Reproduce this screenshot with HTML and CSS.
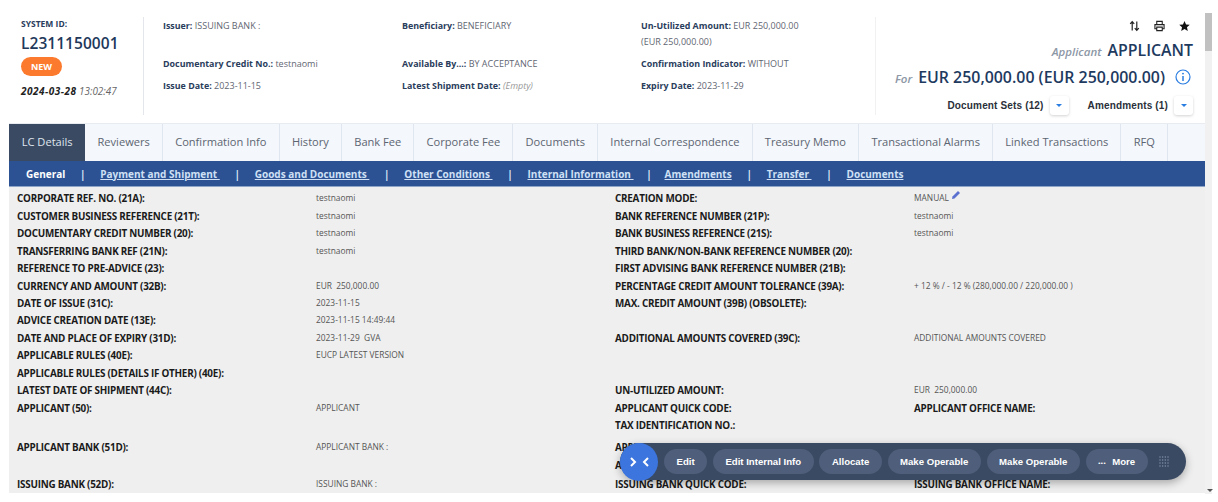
FILE: index.html
```html
<!DOCTYPE html>
<html lang="en">
<head>
<meta charset="utf-8">
<title>LC Details</title>
<link rel="stylesheet" href="styles.css">
</head>
<body>
<div class="shell">
  <main class="main">
    <header class="head">
      <section class="ident">
        <div class="sys-label">SYSTEM ID:</div>
        <div class="sys-id">L2311150001</div>
        <span class="badge">NEW</span>
        <div class="stamp"><b>2024-03-28</b> 13:02:47</div>
      </section>
      <section class="info">
        <div class="info-cell tall"><b>Issuer:</b> ISSUING BANK :</div>
        <div class="info-cell tall"><b>Beneficiary:</b> BENEFICIARY</div>
        <div class="info-cell tall"><b>Un-Utilized Amount:</b> EUR 250,000.00<br>(EUR 250,000.00)</div>
        <div class="info-cell"><b>Documentary Credit No.:</b> testnaomi</div>
        <div class="info-cell"><b>Available By...:</b> BY ACCEPTANCE</div>
        <div class="info-cell"><b>Confirmation Indicator:</b> WITHOUT</div>
        <div class="info-cell"><b>Issue Date:</b> 2023-11-15</div>
        <div class="info-cell"><b>Latest Shipment Date:</b> <i class="empty">(Empty)</i></div>
        <div class="info-cell"><b>Expiry Date:</b> 2023-11-29</div>
      </section>
      <section class="summary">
        <div class="tools">
          <svg class="tool" viewBox="0 0 12 12"><path d="M3.5 11V1.5M1.3 3.7 3.5 1.3l2.2 2.4M8.5 1v9.5M6.3 8.3l2.2 2.4 2.2-2.4" fill="none" stroke="#222" stroke-width="1.3"/></svg>
          <svg class="tool" viewBox="0 0 12 12"><path d="M3 4V1h6v3M3 9H1V4.5h10V9H9M3 7.2h6V11H3z" fill="none" stroke="#222" stroke-width="1.2"/></svg>
          <svg class="tool" viewBox="0 0 12 12"><path d="M6 .6 7.7 4.3l4 .4-3 2.7.9 4L6 9.3l-3.6 2.1.9-4-3-2.7 4-.4z" fill="#111"/></svg>
        </div>
        <div class="party"><i>Applicant</i><strong>APPLICANT</strong></div>
        <div class="amount"><i>For</i><strong>EUR 250,000.00 (EUR 250,000.00)</strong>
          <svg class="info-icon" viewBox="0 0 16 16"><circle cx="8" cy="8" r="7" fill="none" stroke="#2a7de1" stroke-width="1.2"/><path d="M8 7v5" stroke="#2a7de1" stroke-width="1.5"/><circle cx="8" cy="4.6" r=".95" fill="#2a7de1"/></svg>
        </div>
        <div class="drops">
          <span>Document Sets (12)</span><button class="drop" type="button"><span class="caret"></span></button>
          <span class="drop-second">Amendments (1)</span><button class="drop" type="button"><span class="caret"></span></button>
        </div>
      </section>
    </header>

    <nav class="tabs">
      <a class="tab active">LC Details</a>
      <a class="tab">Reviewers</a>
      <a class="tab">Confirmation Info</a>
      <a class="tab">History</a>
      <a class="tab">Bank Fee</a>
      <a class="tab">Corporate Fee</a>
      <a class="tab">Documents</a>
      <a class="tab">Internal Correspondence</a>
      <a class="tab">Treasury Memo</a>
      <a class="tab">Transactional Alarms</a>
      <a class="tab">Linked Transactions</a>
      <a class="tab">RFQ</a>
    </nav>

    <nav class="subnav">
      <a class="current">General</a><span class="sep">|</span>
      <a>Payment and Shipment&nbsp;</a><span class="sep">|</span>
      <a>Goods and Documents&nbsp;</a><span class="sep">|</span>
      <a>Other Conditions&nbsp;</a><span class="sep">|</span>
      <a>Internal Information&nbsp;</a><span class="sep sep-narrow">|</span>
      <a>Amendments</a><span class="sep">|</span>
      <a>Transfer&nbsp;</a><span class="sep">|</span>
      <a>Documents</a>
    </nav>

    <section class="details">
      <div class="row"><b>CORPORATE REF. NO. (21A):</b><span>testnaomi</span><b>CREATION MODE:</b><span>MANUAL <svg class="pencil" viewBox="0 0 10 10"><path d="M1 9l.5-2.500L7 1l2 2-5.500 5.500z" fill="#5b70cf"/></svg></span></div>
      <div class="row"><b>CUSTOMER BUSINESS REFERENCE (21T):</b><span>testnaomi</span><b>BANK REFERENCE NUMBER (21P):</b><span>testnaomi</span></div>
      <div class="row"><b>DOCUMENTARY CREDIT NUMBER (20):</b><span>testnaomi</span><b>BANK BUSINESS REFERENCE (21S):</b><span>testnaomi</span></div>
      <div class="row"><b>TRANSFERRING BANK REF (21N):</b><span>testnaomi</span><b>THIRD BANK/NON-BANK REFERENCE NUMBER (20):</b><span></span></div>
      <div class="row"><b>REFERENCE TO PRE-ADVICE (23):</b><span></span><b>FIRST ADVISING BANK REFERENCE NUMBER (21B):</b><span></span></div>
      <div class="row"><b>CURRENCY AND AMOUNT (32B):</b><span>EUR&nbsp; 250,000.00</span><b>PERCENTAGE CREDIT AMOUNT TOLERANCE (39A):</b><span>+ 12 % / - 12 % (280,000.00 / 220,000.00 )</span></div>
      <div class="row"><b>DATE OF ISSUE (31C):</b><span>2023-11-15</span><b>MAX. CREDIT AMOUNT (39B) (OBSOLETE):</b><span></span></div>
      <div class="row"><b>ADVICE CREATION DATE (13E):</b><span>2023-11-15 14:49:44</span><b></b><span></span></div>
      <div class="row"><b>DATE AND PLACE OF EXPIRY (31D):</b><span>2023-11-29&nbsp; GVA</span><b>ADDITIONAL AMOUNTS COVERED (39C):</b><span>ADDITIONAL AMOUNTS COVERED</span></div>
      <div class="row"><b>APPLICABLE RULES (40E):</b><span>EUCP LATEST VERSION</span><b></b><span></span></div>
      <div class="row"><b>APPLICABLE RULES (DETAILS IF OTHER) (40E):</b><span></span><b></b><span></span></div>
      <div class="row"><b>LATEST DATE OF SHIPMENT (44C):</b><span></span><b>UN-UTILIZED AMOUNT:</b><span>EUR&nbsp; 250,000.00</span></div>
      <div class="row"><b>APPLICANT (50):</b><span>APPLICANT</span><b>APPLICANT QUICK CODE:</b><b>APPLICANT OFFICE NAME:</b></div>
      <div class="row"><b></b><span></span><b>TAX IDENTIFICATION NO.:</b><span></span></div>
      <div class="row row-gap-a"><b>APPLICANT BANK (51D):</b><span>APPLICANT BANK :</span><b>APPLICANT BANK QUICK CODE:</b><span></span></div>
      <div class="row"><b></b><span></span><b>ADVISING BANK:</b><span></span></div>
      <div class="row row-gap-b"><b>ISSUING BANK (52D):</b><span>ISSUING BANK :</span><b>ISSUING BANK QUICK CODE:</b><b>ISSUING BANK OFFICE NAME:</b></div>
    </section>
  </main>
  <aside class="scrollbar"><div class="thumb"></div><div class="arrow"></div></aside>
</div>

<div class="actions">
  <button class="toggle" type="button" aria-label="Toggle"><svg viewBox="0 0 20 12"><path d="M2 2 6 6l-4 4M19 2l-4 4 4 4" fill="none" stroke="#fff" stroke-width="2"/></svg></button>
  <button class="act" type="button">Edit</button>
  <button class="act" type="button">Edit Internal Info</button>
  <button class="act" type="button">Allocate</button>
  <button class="act" type="button">Make Operable</button>
  <button class="act" type="button">Make Operable</button>
  <button class="act" type="button"><span class="dots">•••</span>More</button>
  <svg class="grip" viewBox="0 0 10 11"><g fill="#8896ad"><circle cx="1" cy="1" r=".7"/><circle cx="3.700" cy="1" r=".7"/><circle cx="6.300" cy="1" r=".7"/><circle cx="9" cy="1" r=".7"/><circle cx="1" cy="4" r=".7"/><circle cx="3.700" cy="4" r=".7"/><circle cx="6.300" cy="4" r=".7"/><circle cx="9" cy="4" r=".7"/><circle cx="1" cy="7" r=".7"/><circle cx="3.700" cy="7" r=".7"/><circle cx="6.300" cy="7" r=".7"/><circle cx="9" cy="7" r=".7"/><circle cx="1" cy="10" r=".7"/><circle cx="3.700" cy="10" r=".7"/><circle cx="6.300" cy="10" r=".7"/><circle cx="9" cy="10" r=".7"/></g></svg>
</div>
</body>
</html>
```

FILE: styles.css
```css
* { box-sizing: border-box; }
html, body { height: 100%; }
body {
  margin: 0;
  background: #fff;
  overflow: hidden;
  font-family: "Open Sans", "Liberation Sans", sans-serif;
  color: #555;
}
.shell { display: flex; padding-left: 9px; }
.main { width: 1196px; flex: none; }

/* scrollbar */
.scrollbar {
  position: relative;
  width: 7px;
  height: 481px;
  margin-top: 13px;
  background: #f1f1f1;
}
.thumb { height: 38px; background: #c1c1c1; }
.arrow {
  position: absolute;
  left: 2px;
  bottom: 2px;
  border: 3px solid transparent;
  border-top: 3px solid #555;
  border-bottom: 0;
}

/* header */
.head {
  display: flex;
  height: 123px;
  padding: 17px 12px 0 12px;
}
.ident {
  width: 123px;
  height: 98px;
  flex: none;
  border-right: 1px solid #e3e6ea;
  margin-right: 19px;
}
.sys-label { font-size: 8.500px; font-weight: 700; color: #2a3d5c; line-height: 14px; }
.sys-id { font-size: 15.500px; font-weight: 600; color: #22385a; line-height: 20px; margin-top: 2px; letter-spacing: .05px; }
.badge {
  display: inline-block;
  margin-top: 4px;
  width: 41px;
  height: 19px;
  border-radius: 10px;
  background: #fb7a2d;
  color: #fff;
  font-size: 9px;
  font-weight: 700;
  line-height: 19px;
  text-align: center;
}
.stamp { font-size: 9.900px; font-style: italic; margin-top: 7px; color: #666; line-height: 16px; }
.stamp b { color: #222; font-weight: 700; font-size: 10px; letter-spacing: .5px; }

.info {
  width: 713px;
  flex: none;
  display: grid;
  grid-template-columns: 239px 239px 235px;
  grid-template-rows: 38px 22px 22px;
  padding-top: 1px;
  border-right: 1px solid #f0f1f3;
  height: 98px;
  align-content: start;
  font-size: 9px;
  line-height: 16px;
  color: #5f6672;
}
.info-cell b { color: #2a3d5c; font-weight: 700; font-size: 8.900px; }
.empty { color: #999; }

.summary { flex: 1; display: flex; flex-direction: column; align-items: flex-end; }
.tools { display: flex; gap: 14px; height: 21px; padding: 3px 3px 0 0; }
.tool { width: 11px; height: 12px; display: block; }
.party { display: flex; align-items: baseline; height: 24px; gap: 6px; line-height: 24px; }
.party i { font-size: 11.500px; font-weight: 600; color: #8d97a6; }
.party strong, .amount strong { color: #1e3a5f; font-weight: 600; font-size: 15.900px; }
.amount { display: flex; align-items: center; height: 30px; }
.amount i { font-size: 11.500px; font-weight: 600; color: #8d97a6; margin-right: 6px; position: relative; top: 1px; }
.amount strong { margin-right: 10px; }
.info-icon { width: 16px; height: 16px; margin-right: 2px; }
.drops {
  display: flex;
  align-items: center;
  font-family: "Liberation Sans", Arial, sans-serif;
  font-size: 10px;
  font-weight: 700;
  letter-spacing: .15px;
  color: #2a2f3a;
  height: 19px;
  margin-top: 4px;
}
.drop-second { margin-left: 19px; }
.drop {
  width: 19px;
  height: 19px;
  margin-left: 6px;
  padding: 0;
  border: 0;
  border-radius: 3px;
  background: #fff;
  box-shadow: 0 1px 3px rgba(0,0,0,.18);
  display: flex;
  align-items: center;
  justify-content: center;
}
.caret { border: 3px solid transparent; border-top: 3.500px solid #2a7de1; border-bottom: 0; }

/* tabs */
.tabs {
  display: flex;
  height: 38px;
  background: #f4f7fb;
  border-top: 1px solid #e8ebf0;
}
.tab {
  display: block;
  padding: 0 12.180px;
  line-height: 36px;
  font-size: 11.100px;
  color: #5c6572;
  border-right: 1px solid #dfe6ef;
  white-space: nowrap;
}
.tab.active { background: #3a4a63; color: #dfe5ee; border-right: 0; padding: 0 12.700px; }

.subnav {
  display: flex;
  align-items: center;
  height: 26px;
  padding-left: 17px;
  background: #2c5294;
  font-size: 10px;
  font-weight: 700;
  color: #cfe0f5;
  border-bottom: 1px solid #8ea5c8;
}
.subnav a { text-decoration: underline; white-space: nowrap; }
.subnav a.current { text-decoration: none; color: #fff; }
.sep { width: 35px; text-align: center; color: #dbe6f5; }
.sep-narrow { width: 31px; }

/* details */
.details {
  height: 306px;
  padding-top: 3.400px;
  background: #efefef;
  overflow: hidden;
}
.row {
  display: grid;
  grid-template-columns: 299px 299px 299px 1fr;
  padding-left: 8px;
  height: 17.450px;
  line-height: 17px;
}
.row-gap-a { margin-top: 4.600px; }
.row-gap-b { margin-top: 2.400px; }
.row b { font-size: 9.900px; letter-spacing: -.24px; font-weight: 700; color: #1a1a1a; white-space: nowrap; }
.row span { font-size: 8.400px; color: #555; line-height: 15px; white-space: nowrap; }
.pencil { width: 10px; height: 10px; display: inline-block; vertical-align: 1px; }

/* floating action bar */
.actions {
  position: absolute;
  left: 620px;
  top: 443px;
  width: 566px;
  height: 37px;
  display: flex;
  align-items: center;
  gap: 5.800px;
  padding-left: 44px;
  border-radius: 19px;
  background: #3a4a63;
  box-shadow: 0 3px 8px rgba(0,0,0,.3);
}
.toggle {
  position: absolute;
  left: 0;
  top: 0;
  width: 38px;
  height: 38px;
  padding: 0;
  border: 0;
  border-radius: 50%;
  background: #3c75dd;
  display: flex;
  align-items: center;
  justify-content: center;
}
.toggle svg { width: 20px; height: 12px; }
.act {
  height: 25px;
  padding: 0 12.500px;
  border: 0;
  border-radius: 13px;
  background: #4f5e7a;
  color: #fff;
  font-family: "Liberation Sans", Arial, sans-serif;
  font-size: 9.600px;
  font-weight: 700;
  white-space: nowrap;
}
.dots { font-size: 6px; margin-right: 6px; letter-spacing: .6px; }
.grip { width: 10px; height: 11px; margin-left: 6px; }
```
